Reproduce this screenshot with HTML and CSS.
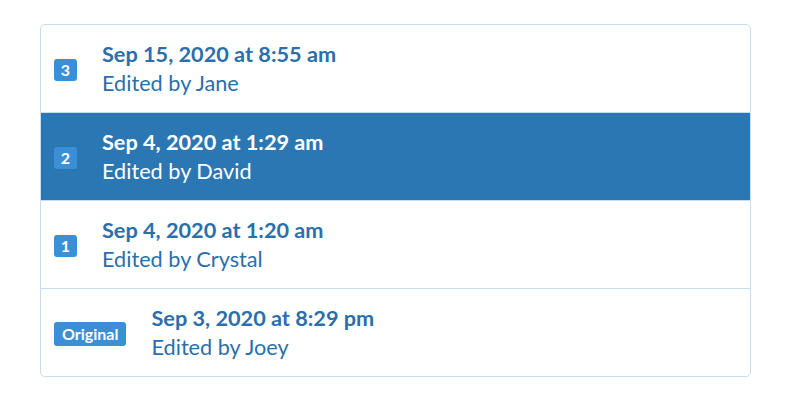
FILE: index.html
```html
<!DOCTYPE html>
<html lang="en">
<head>
  <meta charset="UTF-8" />
  <title>Revisions</title>
  <link rel="stylesheet" href="styles.css">
</head>
<body>
  <!-- Revision history -->
  <ul class="revisions">
    <li class="revision">
      <span class="badge">3</span>
      <div class="info">
        <div class="date">Sep 15, 2020 at 8:55 am</div>
        <div class="editor">Edited by Jane</div>
      </div>
    </li>
    <li class="revision active">
      <span class="badge">2</span>
      <div class="info">
        <div class="date">Sep 4, 2020 at 1:29 am</div>
        <div class="editor">Edited by David</div>
      </div>
    </li>
    <li class="revision">
      <span class="badge">1</span>
      <div class="info">
        <div class="date">Sep 4, 2020 at 1:20 am</div>
        <div class="editor">Edited by Crystal</div>
      </div>
    </li>
    <li class="revision">
      <span class="badge badge-wide">Original</span>
      <div class="info">
        <div class="date">Sep 3, 2020 at 8:29 pm</div>
        <div class="editor">Edited by Joey</div>
      </div>
    </li>
  </ul>
</body>
</html>
```

FILE: styles.css
```css
body {
  font-family: Lato, 'Open Sans', sans-serif;
  margin: 0;
  background-color: #ffffff;
}

.revisions {
  list-style: none;
  margin: 24px 0 0 40px;
  padding: 0;
  width: 709px;
  border: 1px solid #c7deee;
  border-radius: 5px;
  overflow: hidden;
}

.revision {
  display: flex;
  align-items: center;
  gap: 25px;
  height: 87px;
  padding: 0 13px;
  border-bottom: 1px solid #c7deee;
  color: #2a6fab;
}

.revision:last-child {
  border-bottom: none;
}

.revision.active {
  background-color: #2b77b3;
  color: white;
}

.badge {
  width: 23px;
  height: 22px;
  margin-top: 2px;
  background-color: #3a8fd6;
  color: white;
  border-radius: 3px;
  font-size: 16px;
  font-weight: bold;
  line-height: 22px;
  text-align: center;
}

.badge-wide {
  width: auto;
  height: 24px;
  line-height: 24px;
  padding: 0 8px;
  font-size: 16px;
}

.date {
  font-size: 21.7px;
  font-weight: bold;
  line-height: 29px;
}

.editor {
  font-size: 21.7px;
  line-height: 29px;
}
```
